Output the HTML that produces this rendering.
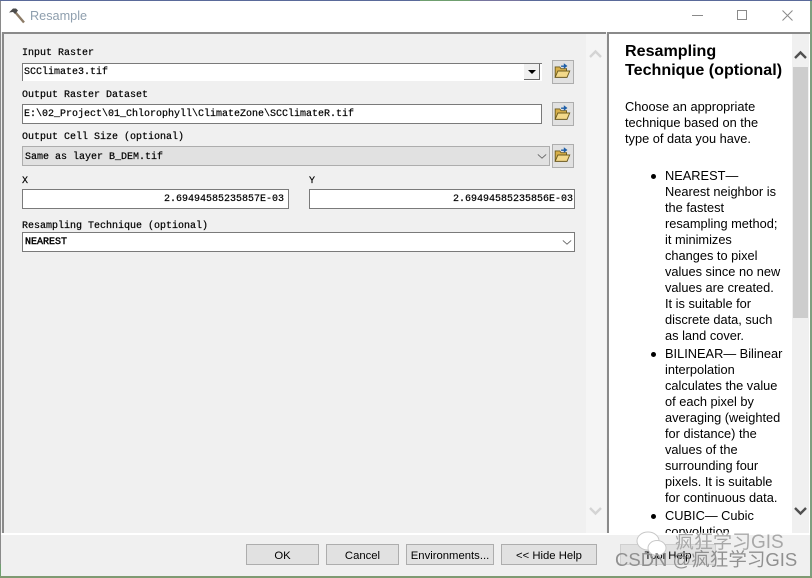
<!DOCTYPE html>
<html><head><meta charset="utf-8"><style>
html,body{margin:0;padding:0}
body{width:812px;height:578px;position:relative;overflow:hidden;background:#f0f0f0;font-family:"Liberation Sans",sans-serif}
.a{position:absolute;box-sizing:border-box}
.m{font:10px/12px "Liberation Mono","Noto Sans CJK SC",monospace;color:#000;white-space:pre;-webkit-text-stroke:.2px #000}
.box{background:#fff;border:1px solid #7a7a7a}
.btn{background:#e1e1e1;border:1px solid #adadad;font-size:11.3px;line-height:22px;text-align:center;color:#000;height:21px;top:544px}
.help{font-size:12.8px;line-height:16px;color:#000;white-space:nowrap}
.fb{width:22px;height:24px;left:552px;background:#e1e1e1;border:1px solid #adadad}
</style></head><body>
<svg width="0" height="0" style="position:absolute"><defs>
<symbol id="folder" viewBox="0 0 22 24">
<path d="M3.500 7.500h5l1.500 2h6v9h-12.500z" fill="#d8b04a" stroke="#6b5a1e"/>
<path d="M3.500 19l3-7h13l-3 7z" fill="#f3d98a" stroke="#6b5a1e"/>
<path d="M10 6h3V3.500L17 6.500l-4 3V7.500h-3z" fill="#1f5fa8"/>
</symbol>
<symbol id="chev" viewBox="0 0 12 8"><path d="M1 1.500l5 4.500 5-4.500" fill="none" stroke="#606060" stroke-width="1"/></symbol>
</defs></svg>

<!-- outer window edges -->
<div class="a" style="left:0;top:0;width:812px;height:1px;background:#5a6a9a"></div>
<div class="a" style="left:420px;top:0;width:50px;height:1px;background:#6f9f6f"></div>
<div class="a" style="left:470px;top:0;width:50px;height:1px;background:#77759f"></div>
<div class="a" style="left:0;top:1px;width:1px;height:577px;background:#8a8a8a"></div>
<div class="a" style="left:0;top:564px;width:1px;height:14px;background:#6f9f6f"></div>
<div class="a" style="left:810px;top:1px;width:2px;height:577px;background:#7f9f7f"></div>
<div class="a" style="left:0;top:576px;width:812px;height:2px;background:#7f9a72"></div>

<!-- title bar -->
<div class="a" style="left:1px;top:1px;width:809px;height:31px;background:#fff"></div>
<svg class="a" style="left:8px;top:6px" width="18" height="18" viewBox="0 0 18 18">
<path d="M7.500 6.500L16 16.500" stroke="#8c7b66" stroke-width="2.400" fill="none"/>
<path d="M1 6.500L5 2.500h3L10 4.500 7 8 5 6z" fill="#4c4c4c"/>
</svg>
<div class="a" style="left:30px;top:8px;font-size:12.700px;line-height:16px;color:#8f9fae">Resample</div>
<div class="a" style="left:692px;top:15px;width:11px;height:1px;background:#8a8a8a"></div>
<div class="a" style="left:737px;top:10px;width:10px;height:10px;border:1px solid #8a8a8a"></div>
<svg class="a" style="left:782px;top:10px" width="11" height="11" viewBox="0 0 11 11"><path d="M.5.500l10 10M10.500.500l-10 10" stroke="#8a8a8a" fill="none"/></svg>

<!-- left panel -->
<div class="a" style="left:2px;top:32px;width:604px;height:501px;background:#f0f0f0;border-top:2px solid #8a8a8a;border-left:2px solid #8a8a8a"></div>
<div class="a" style="left:586px;top:34px;width:20px;height:499px;background:#f5f5f5"></div>
<svg class="a" style="left:589px;top:49px" width="13" height="10" viewBox="0 0 13 10"><path d="M1 8l5.500-5.500L12 8" fill="none" stroke="#d4d4d4" stroke-width="2.400"/></svg>
<svg class="a" style="left:589px;top:506px" width="13" height="10" viewBox="0 0 13 10"><path d="M1 2l5.500 5.500L12 2" fill="none" stroke="#d4d4d4" stroke-width="2.400"/></svg>

<div class="a m" style="left:22px;top:48px">Input Raster</div>
<div class="a" style="left:22px;top:63px;width:520px;height:18px;background:#fff;border-top:1px solid #7a7a7a;border-left:1px solid #7a7a7a"></div>
<div class="a m" style="left:24px;top:67px">SCClimate3.tif</div>
<div class="a" style="left:524px;top:64px;width:16px;height:16px;background:#f0f0f0;border-right:1px solid #696969;border-bottom:1px solid #696969"></div>
<div class="a" style="left:528px;top:70px;width:0;height:0;border-left:4px solid transparent;border-right:4px solid transparent;border-top:4px solid #000"></div>
<div class="a fb" style="top:60px"><svg width="20" height="22" viewBox="1 1 20 22"><use href="#folder"/></svg></div>

<div class="a m" style="left:22px;top:90px">Output Raster Dataset</div>
<div class="a box" style="left:22px;top:104px;width:520px;height:20px"></div>
<div class="a m" style="left:24px;top:109px">E:\02_Project\01_Chlorophyll\ClimateZone\SCClimateR.tif</div>
<div class="a fb" style="top:102px"><svg width="20" height="22" viewBox="1 1 20 22"><use href="#folder"/></svg></div>

<div class="a m" style="left:22px;top:132px">Output Cell Size (optional)</div>
<div class="a" style="left:22px;top:146px;width:528px;height:20px;background:#e1e1e1;border:1px solid #adadad"></div>
<div class="a m" style="left:25px;top:152px">Same as layer B_DEM.tif</div>
<svg class="a" style="left:537px;top:153px" width="10" height="7"><use href="#chev"/></svg>
<div class="a fb" style="top:144px"><svg width="20" height="22" viewBox="1 1 20 22"><use href="#folder"/></svg></div>

<div class="a m" style="left:22px;top:176px">X</div>
<div class="a m" style="left:309px;top:176px">Y</div>
<div class="a box" style="left:22px;top:189px;width:267px;height:20px"></div>
<div class="a m" style="left:22px;top:194px;width:264px;text-align:right;padding-right:2px">2.69494585235857E-03</div>
<div class="a box" style="left:309px;top:189px;width:266px;height:20px"></div>
<div class="a m" style="left:310px;top:194px;width:263px;text-align:right">2.69494585235856E-03</div>

<div class="a m" style="left:22px;top:221px">Resampling Technique (optional)</div>
<div class="a box" style="left:22px;top:232px;width:553px;height:20px"></div>
<div class="a m" style="left:25px;top:237px;-webkit-text-stroke:.4px #000">NEAREST</div>
<svg class="a" style="left:562px;top:239px" width="10" height="7"><use href="#chev"/></svg>

<!-- help panel -->
<div class="a" style="left:607px;top:32px;width:203px;height:501px;background:#fff;border-top:2px solid #8a8a8a;border-left:2px solid #8a8a8a;overflow:hidden">
  <div class="a" style="left:16px;top:8px;font-weight:bold;font-size:16.100px;line-height:19px;white-space:nowrap;color:#000">Resampling<br>Technique (optional)</div>
  <div class="a help" style="left:16px;top:65px">Choose an appropriate<br>technique based on the<br>type of data you have.</div>
  <div class="a help" style="left:56px;top:134px">NEAREST—<br>Nearest neighbor is<br>the fastest<br>resampling method;<br>it minimizes<br>changes to pixel<br>values since no new<br>values are created.<br>It is suitable for<br>discrete data, such<br>as land cover.</div>
  <div class="a" style="left:42px;top:140px;width:5px;height:5px;border-radius:50%;background:#000"></div>
  <div class="a help" style="left:56px;top:312px">BILINEAR— Bilinear<br>interpolation<br>calculates the value<br>of each pixel by<br>averaging (weighted<br>for distance) the<br>values of the<br>surrounding four<br>pixels. It is suitable<br>for continuous data.</div>
  <div class="a" style="left:42px;top:318px;width:5px;height:5px;border-radius:50%;background:#000"></div>
  <div class="a help" style="left:56px;top:474px">CUBIC— Cubic<br>convolution</div>
  <div class="a" style="left:42px;top:480px;width:5px;height:5px;border-radius:50%;background:#000"></div>
  <div class="a" style="left:183px;top:0;width:17px;height:499px;background:#f0f0f0"></div>
  <div class="a" style="left:184px;top:33px;width:15px;height:251px;background:#cdcdcd"></div>
  <svg class="a" style="left:185px;top:16px" width="13" height="10" viewBox="0 0 13 10"><path d="M1 8l5.500-5.500L12 8" fill="none" stroke="#505050" stroke-width="2.400"/></svg>
  <svg class="a" style="left:185px;top:472px" width="13" height="10" viewBox="0 0 13 10"><path d="M1 2l5.500 5.500L12 2" fill="none" stroke="#505050" stroke-width="2.400"/></svg>
</div>

<!-- bottom -->
<div class="a" style="left:1px;top:533px;width:809px;height:2px;background:#fff"></div>
<div class="a btn" style="left:246px;width:73px">OK</div>
<div class="a btn" style="left:326px;width:73px">Cancel</div>
<div class="a btn" style="left:406px;width:88px">Environments...</div>
<div class="a btn" style="left:501px;width:96px">&lt;&lt; Hide Help</div>
<div class="a btn" style="left:620px;width:96px;border-color:#cfcfcf">Tool Help</div>

<!-- watermark -->
<svg class="a" style="left:634px;top:530px" width="36" height="28" viewBox="0 0 36 28">
<ellipse cx="14" cy="11" rx="11" ry="9" fill="#fff" stroke="#c8c8c8"/>
<ellipse cx="23" cy="18" rx="9" ry="7.500" fill="#fff" stroke="#c8c8c8"/>
</svg>
<div class="a" style="left:675px;top:532px;font-size:19px;line-height:22px;color:#a8a8a8;white-space:nowrap;font-family:'Liberation Sans','Noto Sans CJK SC',sans-serif">疯狂学习GIS</div>
<div class="a" style="left:615px;top:549px;font-size:18.500px;line-height:22px;color:#909090;white-space:nowrap;font-family:'Liberation Sans','Noto Sans CJK SC',sans-serif">CSDN @疯狂学习GIS</div>
</body></html>
